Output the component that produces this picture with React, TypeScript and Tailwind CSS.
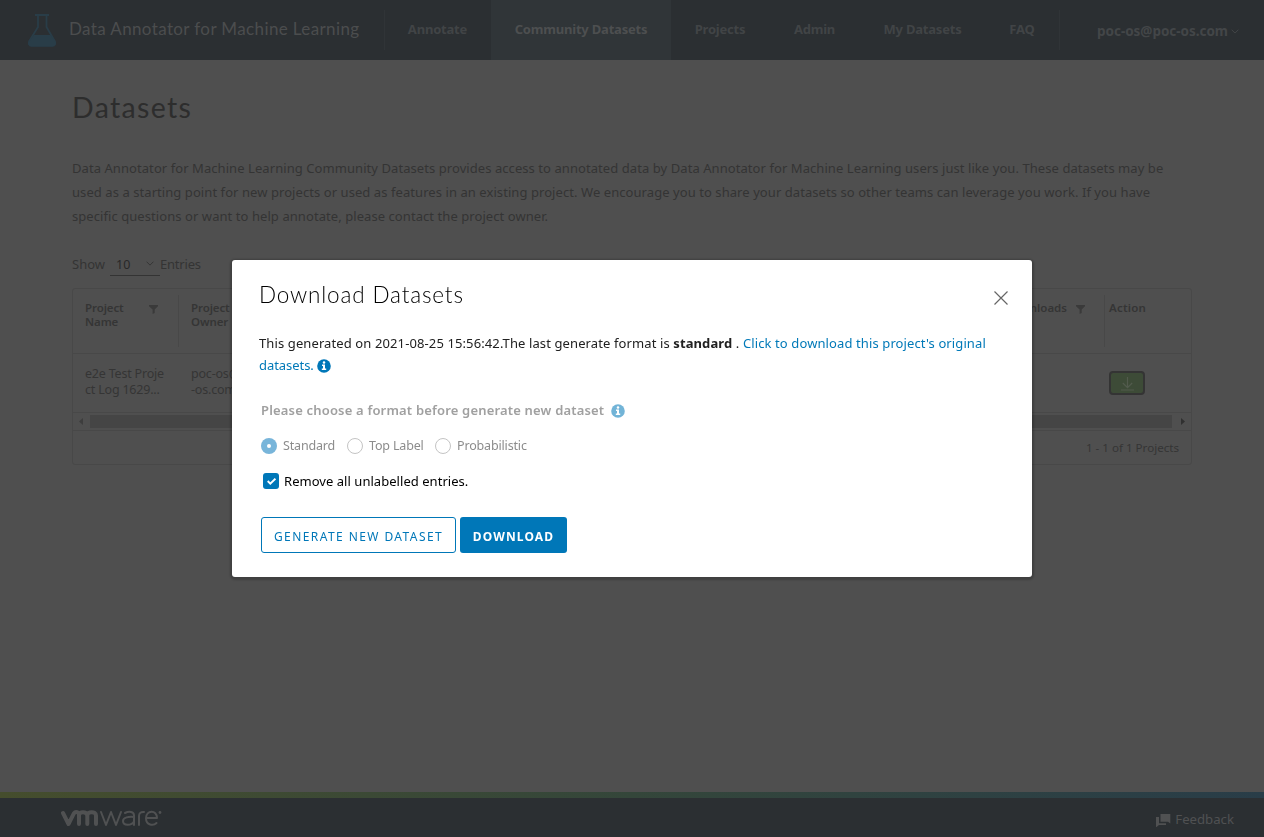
import type { ReactNode } from "react";

function FlaskIcon() {
  return (
    <svg className="h-[33px] w-7" viewBox="0 0 28 33" fill="none">
      <path d="M7 1h14M10 1.500v11.500L1.200 27.200c-1.300 2.300 0 4.600 2.200 4.600h21.200c2.200 0 3.500-2.300 2.200-4.600L18.500 13V1.500" stroke="#293d48" strokeWidth="1.800" />
      <path d="M6 21h16.500l4.500 6.500c1.500 2.500 0 4.700-2.200 4.700H3.200C1 32.200-.5 30 1 27.500z" fill="#293d48" />
    </svg>
  );
}

function Chevron({ className }: { className: string }) {
  return (
    <svg className={className} viewBox="0 0 8 5" fill="none">
      <path d="M.6.7 4 4.100 7.400.7" stroke="currentColor" />
    </svg>
  );
}

function FilterIcon() {
  return (
    <svg className="h-[9px] w-[9px] shrink-0" viewBox="0 0 9 9" fill="#3a3a3a">
      <path d="M0 0h9v1.200L5.700 4.500V8L3.600 9V4.500L0 1.200z" />
    </svg>
  );
}

function InfoIcon({ className }: { className: string }) {
  return (
    <svg className={className} viewBox="0 0 14 14">
      <circle cx="7" cy="7" r="6.800" fill="#0077b8" />
      <circle cx="7" cy="3.600" r="1.250" fill="#fff" />
      <path d="M5 5.600h3v4h1.200v1.400H4.800V9.600H6V7H5z" fill="#fff" />
    </svg>
  );
}

function NavItem({ width, active, children }: { width: string; active?: boolean; children: ReactNode }) {
  return (
    <a className={`flex h-full items-center justify-center whitespace-nowrap text-[13px] font-bold tracking-[-0.2px] ${width} ${active ? "bg-[#303538] text-[#4d4f50]" : "text-[#414446]"}`}>
      {children}
    </a>
  );
}

function Header() {
  return (
    <header className="flex h-[60px] shrink-0 items-center bg-[#2b2f32]">
      <div className="flex w-[384px] items-center pl-7">
        <FlaskIcon />
        <span className="relative -top-px ml-[13px] whitespace-nowrap font-[Lato] text-[17px] tracking-[0.38px] text-[#4b4d4e]">Data Annotator for Machine Learning</span>
      </div>
      <div className="-mr-px h-10 w-px bg-[#303437]" />
      <nav className="flex h-full">
        <NavItem width="w-[107px]">Annotate</NavItem>
        <NavItem width="w-[180px]" active>Community Datasets</NavItem>
        <NavItem width="w-[98px]">Projects</NavItem>
        <NavItem width="w-[91px]">Admin</NavItem>
        <NavItem width="w-[125px]">My Datasets</NavItem>
        <NavItem width="w-[74px]">FAQ</NavItem>
      </nav>
      <div className="h-10 w-px bg-[#303437]" />
      <div className="ml-auto flex items-center gap-[3px] pr-[25px] pt-0.5 text-[13.500px] font-bold text-[#434648]">
        <span className="tracking-[-0.03px]">poc-os@poc-os.com</span>
        <Chevron className="h-[5px] w-2" />
      </div>
    </header>
  );
}

function DatasetTable() {
  return (
    <section className="mt-3 flex h-[177px] w-[1120px] flex-col overflow-hidden rounded-[3px] border border-[#484848] text-[#353535]">
      <div className="flex h-[65px] shrink-0 justify-between border-b border-[#484848] pt-[6px] text-[11.500px] font-semibold leading-[14px]">
        <div className="flex h-[52px] tracking-[-0.1px]">
          <div className="flex w-[106px] border-r border-[#484848] pl-3 pt-[6px]">
            <span className="w-16">Project<br />Name</span>
            <div className="pt-1"><FilterIcon /></div>
          </div>
          <div className="pl-3 pt-[6px]">Project<br />Owner</div>
        </div>
        <div className="flex h-[52px]">
          <span className="pt-[6px]">Downloads</span>
          <div className="ml-[9px] pt-[10px]"><FilterIcon /></div>
          <div className="ml-[19px] w-[87px] border-l border-[#484848] pl-1 pt-[6px] tracking-[0.2px]">Action</div>
        </div>
      </div>
      <div className="flex h-[59px] shrink-0 justify-between border-b border-[#484848] text-[12.500px] leading-4 tracking-[-0.2px]">
        <div className="flex pt-3">
          <p className="w-[106px] pl-3">e2e Test Proje<br />ct Log 1629...</p>
          <p className="pl-3">poc-os@poc<br />-os.com</p>
        </div>
        <button className="mr-[46px] mt-[17px] flex h-6 w-9 items-end justify-center rounded-[4px] border-2 border-[#343434] bg-[#3d4b37] pb-[2px]">
          <svg className="h-[14px] w-[13px]" viewBox="0 0 13 14" fill="none" stroke="#525b4d" strokeWidth="1.200">
            <path d="M6.500 0v10M1.800 6l4.700 4.700L11.200 6M0 13h13" />
          </svg>
        </button>
      </div>
      <div className="flex h-[18px] shrink-0 items-center border-b border-[#484848]">
        <svg className="ml-1.5 h-[7px] w-1" viewBox="0 0 4 7" fill="#3d3d3d"><path d="M4 0v7L0 3.500z" /></svg>
        <div className="ml-[7px] h-[13px] w-[1082px] bg-[#454545]" />
        <svg className="ml-[9px] h-[7px] w-1" viewBox="0 0 4 7" fill="#303030"><path d="M0 0v7l4-3.500z" /></svg>
      </div>
      <div className="flex flex-1 items-center justify-end pr-3 text-[11.600px]">1 - 1 of 1 Projects</div>
    </section>
  );
}

function Radio({ width, checked, children }: { width: string; checked?: boolean; children: ReactNode }) {
  return (
    <label className={`flex items-center gap-1.5 ${width}`}>
      {checked ? (
        <span className="flex h-4 w-4 shrink-0 items-center justify-center rounded-full bg-[#78b5da]"><span className="h-1 w-1 rounded-full bg-white" /></span>
      ) : (
        <span className="h-4 w-4 shrink-0 rounded-full border border-[#c4c4c4]" />
      )}
      <span className="whitespace-nowrap">{children}</span>
    </label>
  );
}

function DownloadDialog() {
  return (
    <div className="fixed inset-0 flex items-center justify-center">
      <div role="dialog" className="flex h-[317px] w-[800px] flex-col rounded-[3px] bg-white pl-[27px] pr-6 text-[13px] text-[#212121] shadow-[0_1px_2px_2px_rgba(0,0,0,0.2)]">
        <div className="flex h-[72px] shrink-0 justify-between">
          <h2 className="pt-[18px] font-[Lato] text-[22.500px] font-light leading-[34px] tracking-[0.840px] text-black">Download Datasets</h2>
          <svg className="mt-[31px] h-[14px] w-[14px]" viewBox="0 0 14 14" fill="none" stroke="#666" strokeWidth="1.200"><path d="m.5.5 13 13M13.500.5l-13 13" /></svg>
        </div>
        <p className="h-[67px] whitespace-nowrap leading-[22px] tracking-[0.110px]">
          This generated on 2021-08-25 15:56:42.The last generate format is <b>standard</b> . <a className="text-[#0079b8]">Click to download this project's original<br /><span className="tracking-[-0.050px]">datasets.</span></a>
          <InfoIcon className="ml-[3px] inline h-[14px] w-[14px] align-[-3px]" />
        </p>
        <div className="ml-[2px] flex h-6 items-center gap-[7px] font-semibold text-[#a0a0a0]">
          <span className="tracking-[0.180px]">Please choose a format before generate new dataset</span>
          <InfoIcon className="h-[14px] w-[14px] opacity-55" />
        </div>
        <div className="ml-[2px] mt-[15px] flex h-4 items-center text-[12.500px] tracking-[-0.160px] text-[#8c8c8c]">
          <Radio width="w-[86px]" checked>Standard</Radio>
          <Radio width="w-[88px]">Top Label</Radio>
          <Radio width="w-[100px]">Probabilistic</Radio>
        </div>
        <label className="ml-1 mt-[19px] flex h-4 items-center gap-[5px] text-black">
          <span className="flex h-4 w-4 items-center justify-center rounded-[3px] bg-[#0077b8]">
            <svg className="h-[7px] w-[9px]" viewBox="0 0 9 7" fill="none" stroke="white" strokeWidth="1.900"><path d="m.7 3 2.600 2.600L8.400.7" /></svg>
          </span>
          <span className="pt-px tracking-[0.040px]">Remove all unlabelled entries.</span>
        </label>
        <div className="ml-[2px] mt-7 flex gap-1 text-xs">
          <button className="h-9 w-[195px] whitespace-nowrap rounded-[3px] border border-[#0077b8] pt-[3px] tracking-[1.420px] text-[#0077b8]">GENERATE NEW DATASET</button>
          <button className="h-9 w-[107px] rounded-[3px] bg-[#0077b8] pt-[3px] font-bold tracking-[1.120px] text-white">DOWNLOAD</button>
        </div>
      </div>
    </div>
  );
}

function Footer() {
  return (
    <footer className="shrink-0">
      <div className="h-1.5 bg-linear-to-r from-[#454d2d] via-[#34463a] to-[#293d48]" />
      <div className="flex h-[39px] items-center justify-between bg-[#2b2f32] pl-[61px] pr-[30px] text-[#505152]">
        <svg className="mt-0.5 h-[17px] w-[101px]" viewBox="0 0 101 17" fill="none" stroke="currentColor" strokeLinecap="round" strokeLinejoin="round">
          <path d="m2 3 5.500 11L13 3.200c1.500-2 5-1.300 5 1.800v9M18 5.500c0-4.500 8-4.500 8.300 0V14M26.300 5.500c0-4.500 8.700-4.500 8.700 0V14" strokeWidth="4" />
          <path d="m40 2 5 13L50 2l5 13L60 2M64 3c4-2 9-1.500 9 2.500V15M73 7c-5-.5-11 .2-11 4 0 5 8.500 5 11 .5M78 15V6c0-3 2-4.300 5-4M85.500 8H96c0-8.500-11-8-11 .3 0 7.200 7.500 7.700 10.500 4.700" strokeWidth="2" />
          <circle cx="99" cy="2.500" r="1.400" fill="currentColor" stroke="none" />
        </svg>
        <div className="flex items-center gap-1 pt-1 text-[13.200px]">
          <svg className="mt-0.5 h-[13px] w-[15px]" viewBox="0 0 15 13" fill="currentColor"><path d="M4.500 0h9.800v9.500L12 7.800H4.500z" /><path d="M0 3h3v6.300h7V11H3L.5 13H0z" /></svg>
          <span>Feedback</span>
        </div>
      </div>
    </footer>
  );
}

export default function App() {
  return (
    <div className="flex h-[837px] flex-col overflow-hidden bg-[#4f4f4f] font-['Noto_Sans',sans-serif]">
      <Header />
      <main className="flex-1 px-[72px] text-[#343434]">
        <h1 className="mt-[29px] font-[Lato] text-[28.500px] leading-9 tracking-[1.350px] text-[#2d2d2d]">Datasets</h1>
        <p className="mt-[31px] whitespace-nowrap text-[13px] leading-6 tracking-[0.068px]">
          Data Annotator for Machine Learning Community Datasets provides access to annotated data by Data Annotator for Machine Learning users just like you. These datasets may be<br />
          used as a starting point for new projects or used as features in an existing project. We encourage you to share your datasets so other teams can leverage you work. If you have<br />
          specific questions or want to help annotate, please contact the project owner.
        </p>
        <div className="mt-6 flex h-6 items-center text-[13px]">
          <span className="w-[38px] pt-0.5">Show</span>
          <span className="flex h-6 w-[50px] items-center justify-between border-b border-[#343434] pl-1.5 pr-1.5 pt-1 text-[12.500px] text-[#282828]">10 <Chevron className="-mt-1 h-[5px] w-2 text-[#363636]" /></span>
          <span className="pt-0.5 tracking-[-0.200px]">Entries</span>
        </div>
        <DatasetTable />
      </main>
      <Footer />
      <DownloadDialog />
    </div>
  );
}
